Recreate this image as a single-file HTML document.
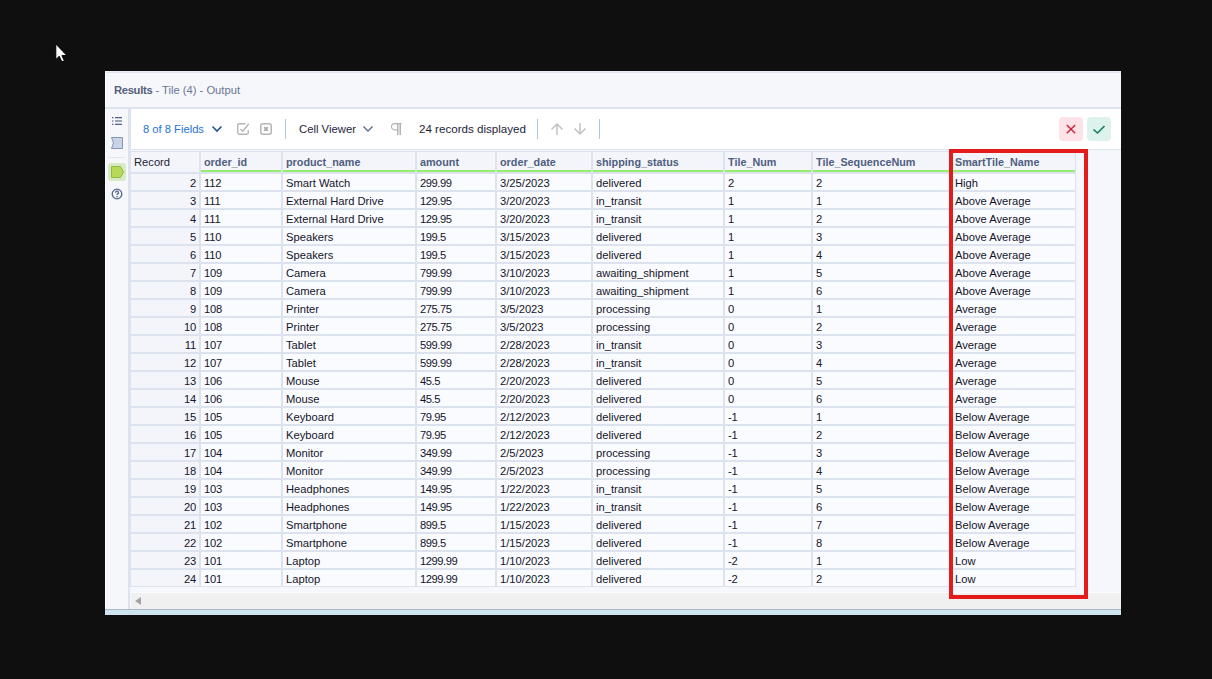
<!DOCTYPE html>
<html><head><meta charset="utf-8"><style>
*{box-sizing:border-box}
html,body{margin:0;padding:0;width:1212px;height:679px;overflow:hidden;background:#0f0f0f;font-family:"Liberation Sans",sans-serif;position:relative}
.a{position:absolute}
.t{position:absolute;white-space:pre;line-height:14px}
table{position:absolute;left:130px;top:151px;border-collapse:separate;border-spacing:0;table-layout:fixed}
td,th{border:1px solid #dce2ee;padding:2px 3px 0 3px;height:18px;white-space:nowrap;overflow:hidden;text-align:left;color:#14142a;background:#fafbfe;line-height:14px;font-weight:normal;vertical-align:top;font-size:11.2px}
th{height:22px;background:#f3f5fa;color:#4f5e80;font-weight:bold;line-height:16px;padding-top:2px;box-shadow:inset 0 -2px 0 #94ee6c;font-size:10.8px}
th.rec{box-shadow:none;color:#1e1e36;font-weight:normal;font-size:11.2px}
td.rec{background:#f3f5fa;text-align:right;letter-spacing:-0.2px}
td.n{letter-spacing:-0.2px}
td.m{letter-spacing:-0.45px}
</style></head><body>
<!-- window -->
<div class="a" style="left:105px;top:71px;width:1016px;height:544px;background:#f5f7fb"></div>
<div class="a" style="left:105px;top:71px;width:1016px;height:1px;background:#e7edfa"></div>
<div class="a" style="left:105px;top:72px;width:1016px;height:1px;background:#e0e6f0"></div>
<div class="a" style="left:105px;top:71px;width:1px;height:538px;background:#fdfeff"></div>
<div class="t" style="left:114px;top:83px;font-size:11.2px;color:#6b7590"><b style="color:#565f7b;letter-spacing:-0.3px">Results</b> - Tile (4) - Output</div>
<div class="a" style="left:105px;top:107px;width:1016px;height:2px;background:#dce2ee"></div>
<!-- sidebar -->
<div class="a" style="left:128px;top:109px;width:2px;height:500px;background:#dce2ee"></div>
<div class="a" style="left:130px;top:109px;width:1px;height:478px;background:#dce2ee"></div>
<svg class="a" style="left:105px;top:109px" width="23" height="100" viewBox="0 0 23 100">
 <rect x="7" y="8" width="1.4" height="1.3" fill="#56658a"/><rect x="10" y="8" width="7" height="1.3" fill="#56658a"/>
 <rect x="7" y="11" width="1.4" height="2" fill="#9aa4ba"/><rect x="10" y="11" width="7" height="2" fill="#9aa4ba"/>
 <rect x="7" y="14.7" width="1.4" height="1.3" fill="#56658a"/><rect x="10" y="14.7" width="7" height="1.3" fill="#56658a"/>
 <path d="M6.5 28.5 H17.5 V39.5 H6.5 L8.5 34 Z" fill="#c9d3e8" stroke="#8795b8" stroke-width="1"/>
 <rect x="3" y="48" width="17" height="1" fill="#dfe4ee"/>
 <rect x="3" y="54" width="18" height="18" rx="3" fill="#d8eac4"/>
 <path d="M6.5 57.5 H15.5 L18.5 63 L15.5 68.5 H6.5 Z" fill="#b5da57" stroke="#93b944" stroke-width="1"/>
 <circle cx="12" cy="85" r="4.8" fill="none" stroke="#55648a" stroke-width="1.3"/>
 <path d="M10.6 83.7 A1.45 1.45 0 1 1 12.7 84.9 Q12 85.3 12 86.1" fill="none" stroke="#55648a" stroke-width="1.3"/>
 <rect x="11.3" y="87" width="1.5" height="1.3" fill="#55648a"/>
</svg>
<!-- toolbar -->
<div class="a" style="left:131px;top:109px;width:990px;height:40px;background:#fff"></div>
<div class="a" style="left:132px;top:149px;width:989px;height:1px;background:#dde3ee"></div>
<div class="t" style="left:143px;top:122px;font-size:11.2px;color:#2574d2">8 of 8 Fields</div>
<svg class="a" style="left:211px;top:125px" width="12" height="8"><path d="M1.5 1.5 L6 6 L10.5 1.5" fill="none" stroke="#1f5590" stroke-width="1.6"/></svg>
<svg class="a" style="left:236px;top:122px" width="14" height="14"><path d="M9.5 1.75 H3 A1.5 1.5 0 0 0 1.75 3 V11 A1.5 1.5 0 0 0 3 12.25 H11 A1.5 1.5 0 0 0 12.25 11 V8" fill="none" stroke="#b5b5b5" stroke-width="1.4"/><path d="M4.5 7 L6.8 9.2 L12.8 1.8" fill="none" stroke="#b5b5b5" stroke-width="1.4"/></svg>
<svg class="a" style="left:259px;top:122px" width="14" height="14"><rect x="1.75" y="1.75" width="10.5" height="10.5" rx="2.2" fill="none" stroke="#b5b5b5" stroke-width="1.5"/><path d="M5.2 5.2 L8.8 8.8 M8.8 5.2 L5.2 8.8" stroke="#adadad" stroke-width="1.9"/></svg>
<div class="a" style="left:285px;top:119px;width:1px;height:20px;background:#b3c2dc"></div>
<div class="t" style="left:299px;top:122px;font-size:11.3px;color:#1e1e36">Cell Viewer</div>
<svg class="a" style="left:362px;top:125px" width="12" height="8"><path d="M1.5 1.5 L6 6 L10.5 1.5" fill="none" stroke="#5a6a8a" stroke-width="1.3"/></svg>
<svg class="a" style="left:385px;top:116px" width="24" height="24">
 <path d="M12.5 7.6 H9.6 A3.1 3.1 0 0 0 9.6 13.8 H12.5" fill="none" stroke="#b8b8b8" stroke-width="1.2"/>
 <rect x="13" y="8" width="2" height="11" fill="#e2e2e2"/>
 <rect x="12" y="7" width="1.2" height="12" fill="#b4b4b4"/><rect x="14.8" y="7" width="1.2" height="12" fill="#b4b4b4"/>
 <rect x="9" y="7" width="7.8" height="1.2" fill="#b4b4b4"/>
</svg>
<div class="t" style="left:419px;top:122px;font-size:11.6px;color:#1e1e36">24 records displayed</div>
<div class="a" style="left:537px;top:119px;width:1px;height:20px;background:#b3c2dc"></div>
<svg class="a" style="left:550px;top:122px" width="14" height="14"><path d="M7 13 V2 M1.5 7.5 L7 2 L12.5 7.5" fill="none" stroke="#c2c2c2" stroke-width="1.5"/></svg>
<svg class="a" style="left:573px;top:122px" width="14" height="14"><path d="M7 1 V12 M1.5 6.5 L7 12 L12.5 6.5" fill="none" stroke="#c2c2c2" stroke-width="1.5"/></svg>
<div class="a" style="left:599px;top:119px;width:1px;height:20px;background:#b3c2dc"></div>
<div class="a" style="left:1059px;top:117px;width:24px;height:24px;border-radius:4px;background:#fde3e8"></div>
<svg class="a" style="left:1059px;top:117px" width="24" height="24"><path d="M7.8 7.9 L16.2 16.3 M16.2 7.9 L7.8 16.3" stroke="#d21f3c" stroke-width="1.4"/></svg>
<div class="a" style="left:1087px;top:117px;width:24px;height:24px;border-radius:4px;background:#ddf2ec"></div>
<svg class="a" style="left:1087px;top:117px" width="24" height="24"><path d="M6.5 12.5 L10.5 16 L17.5 9" fill="none" stroke="#0f7d5b" stroke-width="1.6"/></svg>
<!-- table area -->
<div class="a" style="left:131px;top:150px;width:990px;height:443px;background:#f5f7fc"></div>
<table>
<tr><th style='width:70px' class=rec>Record</th><th style='width:82px'>order_id</th><th style='width:134px'>product_name</th><th style='width:80px'>amount</th><th style='width:96px'>order_date</th><th style='width:132px'>shipping_status</th><th style='width:88px'>Tile_Num</th><th style='width:139px'>Tile_SequenceNum</th><th style='width:125px'>SmartTile_Name</th></tr>
<tr><td class=rec>2</td><td class=n>112</td><td>Smart Watch</td><td class=m>299.99</td><td>3/25/2023</td><td>delivered</td><td class=n>2</td><td class=n>2</td><td>High</td></tr>
<tr><td class=rec>3</td><td class=n>111</td><td>External Hard Drive</td><td class=m>129.95</td><td>3/20/2023</td><td>in_transit</td><td class=n>1</td><td class=n>1</td><td>Above Average</td></tr>
<tr><td class=rec>4</td><td class=n>111</td><td>External Hard Drive</td><td class=m>129.95</td><td>3/20/2023</td><td>in_transit</td><td class=n>1</td><td class=n>2</td><td>Above Average</td></tr>
<tr><td class=rec>5</td><td class=n>110</td><td>Speakers</td><td class=m>199.5</td><td>3/15/2023</td><td>delivered</td><td class=n>1</td><td class=n>3</td><td>Above Average</td></tr>
<tr><td class=rec>6</td><td class=n>110</td><td>Speakers</td><td class=m>199.5</td><td>3/15/2023</td><td>delivered</td><td class=n>1</td><td class=n>4</td><td>Above Average</td></tr>
<tr><td class=rec>7</td><td class=n>109</td><td>Camera</td><td class=m>799.99</td><td>3/10/2023</td><td>awaiting_shipment</td><td class=n>1</td><td class=n>5</td><td>Above Average</td></tr>
<tr><td class=rec>8</td><td class=n>109</td><td>Camera</td><td class=m>799.99</td><td>3/10/2023</td><td>awaiting_shipment</td><td class=n>1</td><td class=n>6</td><td>Above Average</td></tr>
<tr><td class=rec>9</td><td class=n>108</td><td>Printer</td><td class=m>275.75</td><td>3/5/2023</td><td>processing</td><td class=n>0</td><td class=n>1</td><td>Average</td></tr>
<tr><td class=rec>10</td><td class=n>108</td><td>Printer</td><td class=m>275.75</td><td>3/5/2023</td><td>processing</td><td class=n>0</td><td class=n>2</td><td>Average</td></tr>
<tr><td class=rec>11</td><td class=n>107</td><td>Tablet</td><td class=m>599.99</td><td>2/28/2023</td><td>in_transit</td><td class=n>0</td><td class=n>3</td><td>Average</td></tr>
<tr><td class=rec>12</td><td class=n>107</td><td>Tablet</td><td class=m>599.99</td><td>2/28/2023</td><td>in_transit</td><td class=n>0</td><td class=n>4</td><td>Average</td></tr>
<tr><td class=rec>13</td><td class=n>106</td><td>Mouse</td><td class=m>45.5</td><td>2/20/2023</td><td>delivered</td><td class=n>0</td><td class=n>5</td><td>Average</td></tr>
<tr><td class=rec>14</td><td class=n>106</td><td>Mouse</td><td class=m>45.5</td><td>2/20/2023</td><td>delivered</td><td class=n>0</td><td class=n>6</td><td>Average</td></tr>
<tr><td class=rec>15</td><td class=n>105</td><td>Keyboard</td><td class=m>79.95</td><td>2/12/2023</td><td>delivered</td><td class=n>-1</td><td class=n>1</td><td>Below Average</td></tr>
<tr><td class=rec>16</td><td class=n>105</td><td>Keyboard</td><td class=m>79.95</td><td>2/12/2023</td><td>delivered</td><td class=n>-1</td><td class=n>2</td><td>Below Average</td></tr>
<tr><td class=rec>17</td><td class=n>104</td><td>Monitor</td><td class=m>349.99</td><td>2/5/2023</td><td>processing</td><td class=n>-1</td><td class=n>3</td><td>Below Average</td></tr>
<tr><td class=rec>18</td><td class=n>104</td><td>Monitor</td><td class=m>349.99</td><td>2/5/2023</td><td>processing</td><td class=n>-1</td><td class=n>4</td><td>Below Average</td></tr>
<tr><td class=rec>19</td><td class=n>103</td><td>Headphones</td><td class=m>149.95</td><td>1/22/2023</td><td>in_transit</td><td class=n>-1</td><td class=n>5</td><td>Below Average</td></tr>
<tr><td class=rec>20</td><td class=n>103</td><td>Headphones</td><td class=m>149.95</td><td>1/22/2023</td><td>in_transit</td><td class=n>-1</td><td class=n>6</td><td>Below Average</td></tr>
<tr><td class=rec>21</td><td class=n>102</td><td>Smartphone</td><td class=m>899.5</td><td>1/15/2023</td><td>delivered</td><td class=n>-1</td><td class=n>7</td><td>Below Average</td></tr>
<tr><td class=rec>22</td><td class=n>102</td><td>Smartphone</td><td class=m>899.5</td><td>1/15/2023</td><td>delivered</td><td class=n>-1</td><td class=n>8</td><td>Below Average</td></tr>
<tr><td class=rec>23</td><td class=n>101</td><td>Laptop</td><td class=m>1299.99</td><td>1/10/2023</td><td>delivered</td><td class=n>-2</td><td class=n>1</td><td>Low</td></tr>
<tr><td class=rec>24</td><td class=n>101</td><td>Laptop</td><td class=m>1299.99</td><td>1/10/2023</td><td>delivered</td><td class=n>-2</td><td class=n>2</td><td>Low</td></tr>

</table>
<div class="a" style="left:131px;top:592px;width:990px;height:1px;background:#fcfdff"></div>
<div class="a" style="left:131px;top:593px;width:990px;height:16px;background:#f0f0f0"></div>
<svg class="a" style="left:134px;top:596px" width="9" height="11"><path d="M7 1 V9 L1 5 Z" fill="#a3a3a3"/></svg>
<div class="a" style="left:105px;top:609px;width:1016px;height:1px;background:#a9b8c0"></div>
<div class="a" style="left:105px;top:610px;width:1016px;height:5px;background:#cee5ef"></div>
<div class="a" style="left:949px;top:149px;width:139px;height:450px;border:4px solid #e31b1b"></div>
<svg class="a" style="left:0;top:0" width="80" height="80"><path d="M55.8 44 V59.6 L59.2 56.2 L61.8 61.8 L64.4 60.8 L61.9 55.6 L66.9 55.6 Z" fill="#fff" stroke="#000" stroke-width="1"/></svg>
</body></html>
